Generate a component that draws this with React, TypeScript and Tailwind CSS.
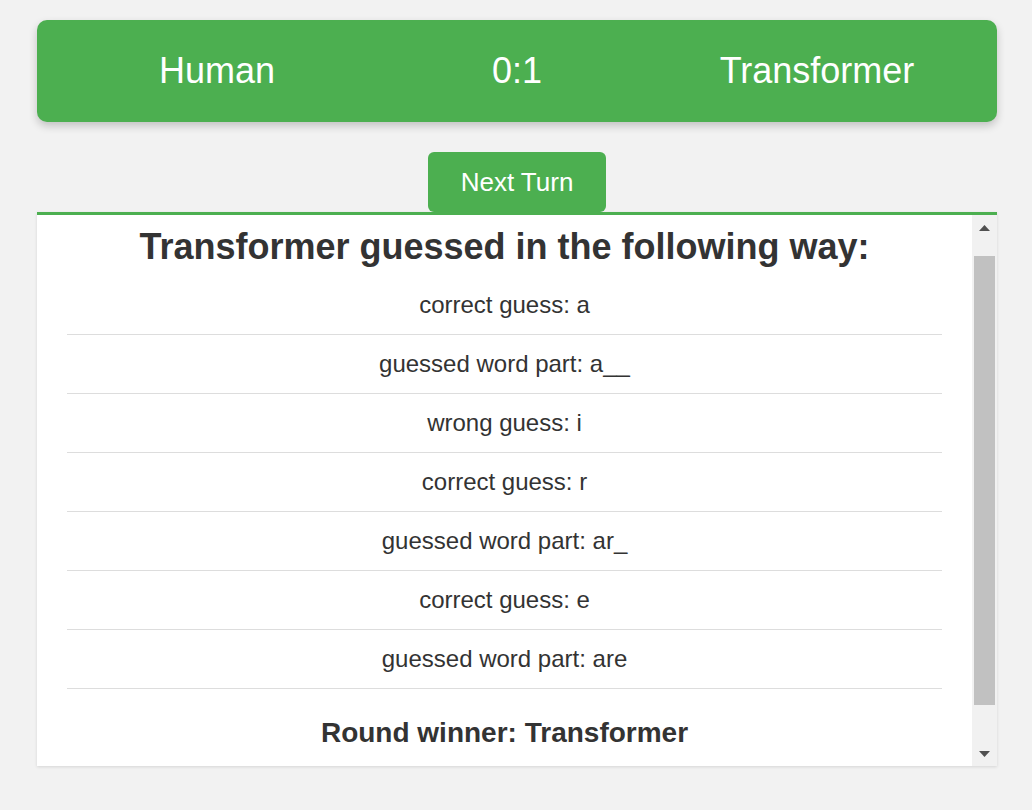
const moves = [
  "correct guess: a",
  "guessed word part: a__",
  "wrong guess: i",
  "correct guess: r",
  "guessed word part: ar_",
  "correct guess: e",
  "guessed word part: are",
];

function ScrollArrow({ down }: { down?: boolean }) {
  return (
    <div className="flex h-[25px] items-center justify-center">
      <svg width="11" height="6" viewBox="0 0 11 6">
        <path d={down ? "M0 0 H11 L5.5 6 Z" : "M0 6 H11 L5.5 0 Z"} fill="#505050" />
      </svg>
    </div>
  );
}

export default function App() {
  const players = ["Human", "0:1", "Transformer"];

  return (
    <div
      className="min-h-[810px] bg-[#f2f2f2] pt-5 text-[#333]"
      style={{ fontFamily: '"Liberation Sans", Arial, sans-serif' }}
    >
      <div className="ml-[37px] w-[960px]">
        <div className="flex h-[102px] items-center rounded-[10px] bg-[#4caf50] px-[30px] text-[36px] text-white shadow-[0_4px_8px_rgba(0,0,0,0.2)]">
          {players.map((p) => (
            <div key={p} className="flex-1 text-center">
              {p}
            </div>
          ))}
        </div>

        <div className="mt-[30px] flex justify-center">
          <button className="h-[60px] rounded-[6px] bg-[#4caf50] px-[33px] text-[26px] text-white">
            Next Turn
          </button>
        </div>

        <div className="flex h-[554px] border-t-[3px] border-[#4caf50] bg-white shadow-[0_1px_3px_rgba(0,0,0,0.12)]">
          <div className="flex-1 overflow-hidden pt-[10px]">
            <h2 className="text-center text-[36px] leading-[43px] font-bold">
              Transformer guessed in the following way:
            </h2>
            <ul className="mx-[30px] mt-2">
              {moves.map((m, i) => (
                <li
                  key={i}
                  className="border-b border-[#ddd] py-[15px] text-center text-[24px] leading-[28px]"
                >
                  {m}
                </li>
              ))}
            </ul>
            <p className="mt-[28px] text-center text-[28px] leading-[32px] font-bold">
              Round winner: Transformer
            </p>
          </div>
          <div className="flex w-[25px] flex-col bg-[#f1f1f1]">
            <ScrollArrow />
            <div className="flex-1 px-[2px] pt-[16px]">
              <div className="h-[449px] bg-[#c1c1c1]" />
            </div>
            <ScrollArrow down />
          </div>
        </div>
      </div>
    </div>
  );
}
